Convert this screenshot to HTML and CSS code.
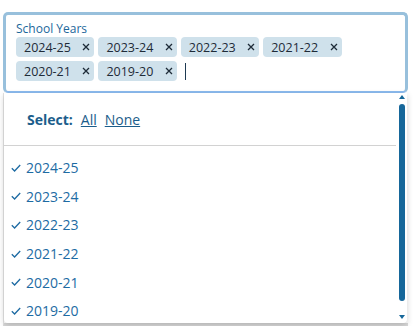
FILE: index.html
```html
<!DOCTYPE html>
<html lang="en">

<head>
    <meta charset="UTF-8">
    <meta name="viewport" content="width=device-width, initial-scale=1.0">
    <title>School Years</title>
    <link rel="stylesheet" href="styles.css">
</head>

<body>
    <div class="picker">
        <div class="field">
            <div class="field-label">School Years</div>
            <div class="tags">
                <span class="tag">2024-25<svg class="tag-x" viewBox="0 0 8 8"><path d="M1 1L7 7M7 1L1 7" /></svg></span>
                <span class="tag">2023-24<svg class="tag-x" viewBox="0 0 8 8"><path d="M1 1L7 7M7 1L1 7" /></svg></span>
                <span class="tag">2022-23<svg class="tag-x" viewBox="0 0 8 8"><path d="M1 1L7 7M7 1L1 7" /></svg></span>
                <span class="tag">2021-22<svg class="tag-x" viewBox="0 0 8 8"><path d="M1 1L7 7M7 1L1 7" /></svg></span>
                <span class="tag">2020-21<svg class="tag-x" viewBox="0 0 8 8"><path d="M1 1L7 7M7 1L1 7" /></svg></span>
                <span class="tag">2019-20<svg class="tag-x" viewBox="0 0 8 8"><path d="M1 1L7 7M7 1L1 7" /></svg></span>
                <span class="caret"></span>
            </div>
        </div>

        <div class="backdrop"></div>

        <!-- dropdown menu -->
        <div class="menu">
            <div class="menu-body">
                <div class="select-row">
                    <span class="select-title">Select:</span>
                    <a href="#" class="select-link">All</a>
                    <a href="#" class="select-link">None</a>
                </div>
                <ul class="options">
                    <li><svg class="check" viewBox="0 0 10 8"><path d="M0.8 4.2L3.6 7L9.2 1" /></svg>2024-25</li>
                    <li><svg class="check" viewBox="0 0 10 8"><path d="M0.8 4.2L3.6 7L9.2 1" /></svg>2023-24</li>
                    <li><svg class="check" viewBox="0 0 10 8"><path d="M0.8 4.2L3.6 7L9.2 1" /></svg>2022-23</li>
                    <li><svg class="check" viewBox="0 0 10 8"><path d="M0.8 4.2L3.6 7L9.2 1" /></svg>2021-22</li>
                    <li><svg class="check" viewBox="0 0 10 8"><path d="M0.8 4.2L3.6 7L9.2 1" /></svg>2020-21</li>
                    <li><svg class="check" viewBox="0 0 10 8"><path d="M0.8 4.2L3.6 7L9.2 1" /></svg>2019-20</li>
                </ul>
            </div>
            <div class="scrollbar">
                <span class="arrow-up"></span>
                <span class="thumb"></span>
                <span class="arrow-down"></span>
            </div>
        </div>
    </div>
</body>

</html>
```

FILE: styles.css
```css
body {
    font-family: 'Open Sans', 'Liberation Sans', sans-serif;
    margin: 0;
    padding: 0;
    background-color: #fff;
}

.picker {
    position: relative;
    padding: 12px 7px 0 3px;
}

.field {
    height: 81px;
    box-sizing: border-box;
    border: 3px solid #98c0dc;
    border-bottom: 2px solid #8cbcf0;
    border-radius: 5px;
    padding: 6px 10px 0 10px;
}

.field-label {
    font-size: 12px;
    line-height: 16px;
    color: #1c679b;
}

.tags {
    display: flex;
    flex-wrap: wrap;
    gap: 4px;
    align-items: center;
}

.tag {
    display: flex;
    align-items: center;
    height: 20px;
    padding: 0 4px 0 8px;
    background-color: #cfe1eb;
    border-radius: 4px;
    font-size: 12.5px;
    color: #1e2b38;
}

.tag-x {
    width: 8px;
    height: 8px;
    margin-left: 11.5px;
    fill: none;
    stroke: #1e2b38;
    stroke-width: 1.3;
}

.caret {
    width: 1px;
    height: 17px;
    margin-left: 4px;
    background-color: #1e3a52;
}

.backdrop {
    height: 233px;
    border-left: 1px solid #e4e4e4;
    border-bottom: 3px solid #d8d8d8;
    box-sizing: border-box;
}

.menu {
    position: absolute;
    left: 4px;
    top: 93px;
    width: 403px;
    height: 230px;
    display: flex;
    background-color: #fff;
    border-radius: 0 0 4px 4px;
    box-shadow: 0 2px 6px rgba(0, 0, 0, 0.18);
}

.menu-body {
    flex: 1;
}

.select-row {
    display: flex;
    align-items: center;
    gap: 8px;
    height: 52px;
    padding-left: 23px;
    border-bottom: 1px solid #d2d2d2;
    font-size: 14px;
}

.select-title {
    font-weight: bold;
    color: #1b5d8b;
}

.select-link {
    color: #1b5d8b;
    text-decoration: underline;
}

.options {
    list-style-type: none;
    margin: 0;
    padding: 7.5px 0 0 0;
}

.options li {
    display: flex;
    align-items: center;
    height: 28.6px;
    padding-left: 7px;
    font-size: 14px;
    color: #1d6ba3;
}

.check {
    width: 10px;
    height: 8px;
    margin-right: 5px;
    fill: none;
    stroke: #1d6ba3;
    stroke-width: 1.3;
}

.scrollbar {
    width: 11px;
    display: flex;
    flex-direction: column;
    align-items: center;
    padding: 2px 0 4px 0;
    box-sizing: border-box;
}

.arrow-up,
.arrow-down {
    width: 0;
    height: 0;
    border-left: 3px solid transparent;
    border-right: 3px solid transparent;
}

.arrow-up {
    border-bottom: 4px solid #16679a;
}

.arrow-down {
    border-top: 4px solid #16679a;
}

.thumb {
    flex: 1;
    width: 6px;
    margin: 5px 0 14px 0;
    background-color: #16679a;
    border-radius: 3px;
}
```
